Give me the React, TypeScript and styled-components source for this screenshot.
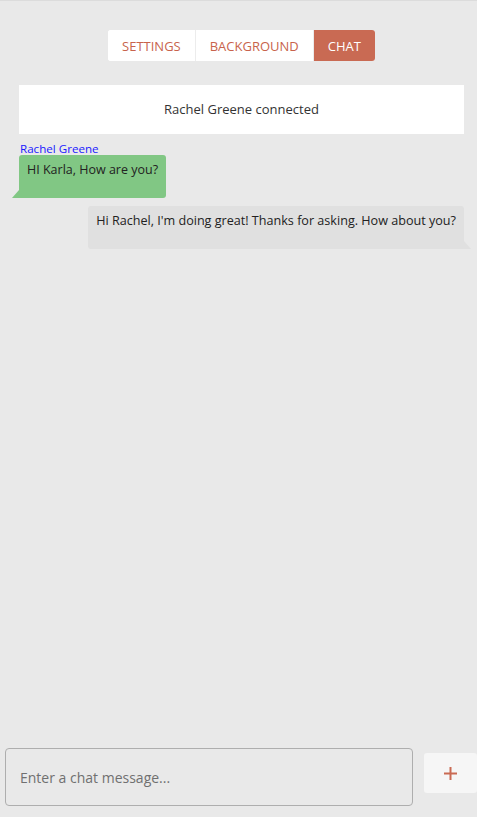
import React, { useState } from 'react';
import styled, { createGlobalStyle } from 'styled-components';

const GlobalStyle = createGlobalStyle`
  html, body {
    margin: 0;
    padding: 0;
    height: 100%;
    overflow: hidden;
    background: #e9e9e9;
    font-family: 'Open Sans', 'Noto Sans', sans-serif;
  }
  #root {
    height: 100%;
  }
`;

const Page = styled.div`
  box-sizing: border-box;
  height: 100%;
  display: flex;
  flex-direction: column;
  border-top: 1px solid #dcdcdc;
`;

const Content = styled.div`
  flex: 1;
  display: flex;
  flex-direction: column;
  padding: 29px 13px 0 19px;
`;

const TabBar = styled.div`
  align-self: center;
  display: flex;
  height: 31px;
  border-radius: 3px;
  overflow: hidden;
  background: #ffffff;
`;

const Tab = styled.button<{ $active?: boolean }>`
  border: none;
  margin: 0;
  padding: 0 14px;
  font-family: inherit;
  font-size: 13px;
  text-transform: uppercase;
  cursor: pointer;
  background: ${({ $active }) => ($active ? '#c96a53' : '#ffffff')};
  color: ${({ $active }) => ($active ? '#ffffff' : '#c8634c')};

  & + & {
    border-left: 1px solid #ececec;
  }
`;

const Notice = styled.div`
  margin-top: 24px;
  padding: 15px 0;
  background: #ffffff;
  color: #333333;
  font-size: 13px;
  line-height: 19px;
  text-align: center;
`;

const MessageList = styled.div`
  display: flex;
  flex-direction: column;
  margin-top: 8px;
`;

const Sender = styled.div`
  color: #1a1aff;
  font-size: 11.6px;
  line-height: 13px;
  margin-left: 1px;
`;

const Bubble = styled.div<{ $mine?: boolean }>`
  position: relative;
  align-self: ${({ $mine }) => ($mine ? 'flex-end' : 'flex-start')};
  margin-top: ${({ $mine }) => ($mine ? '8px' : '0')};
  padding: 6px 8px 19px;
  font-size: ${({ $mine }) => ($mine ? '12.6px' : '12.5px')};
  line-height: 18px;
  color: #222222;
  background: ${({ $mine }) => ($mine ? '#e0e0e0' : '#81c784')};
  border-radius: ${({ $mine }) => ($mine ? '3px 3px 0 3px' : '3px 3px 3px 0')};

  &::after {
    content: '';
    position: absolute;
    bottom: 0;
    width: 0;
    height: 0;
    border-bottom: 8px solid ${({ $mine }) => ($mine ? '#e0e0e0' : '#81c784')};
    ${({ $mine }) =>
      $mine
        ? 'right: -7px; border-right: 7px solid transparent;'
        : 'left: -7px; border-left: 7px solid transparent;'}
  }
`;

const Composer = styled.div`
  display: flex;
  align-items: flex-start;
  gap: 11px;
  padding: 0 0 11px 5px;
`;

const MessageInput = styled.input`
  box-sizing: border-box;
  flex-shrink: 0;
  width: 408px;
  height: 58px;
  padding: 0 14px;
  border: 1px solid #aeaeae;
  border-radius: 4px;
  background: transparent;
  font-family: inherit;
  font-size: 14px;
  color: #333333;
  outline: none;

  &::placeholder {
    color: #707070;
  }
`;

const AddButton = styled.button`
  flex-shrink: 0;
  width: 53px;
  height: 40px;
  margin-top: 5px;
  padding: 0;
  border: none;
  border-radius: 3px;
  background: #f6f6f6;
  display: flex;
  align-items: center;
  justify-content: center;
  cursor: pointer;
`;

const tabs = ['Settings', 'Background', 'Chat'];

export default function App() {
  const [tab, setTab] = useState('Chat');
  const [text, setText] = useState('');

  return (
    <Page>
      <GlobalStyle />
      <Content>
        <TabBar>
          {tabs.map((t) => (
            <Tab key={t} $active={t === tab} onClick={() => setTab(t)}>
              {t}
            </Tab>
          ))}
        </TabBar>
        <Notice>Rachel Greene connected</Notice>
        <MessageList>
          <Sender>Rachel Greene</Sender>
          <Bubble>HI Karla, How are you?</Bubble>
          <Bubble $mine>Hi Rachel, I'm doing great! Thanks for asking. How about you?</Bubble>
        </MessageList>
      </Content>
      <Composer>
        <MessageInput
          placeholder="Enter a chat message..."
          value={text}
          onChange={(e) => setText(e.target.value)}
        />
        <AddButton aria-label="Add">
          <svg width="13" height="13" viewBox="0 0 13 13">
            <path d="M6.5 0v13M0 6.5h13" stroke="#c96a53" strokeWidth="2" />
          </svg>
        </AddButton>
      </Composer>
    </Page>
  );
}
